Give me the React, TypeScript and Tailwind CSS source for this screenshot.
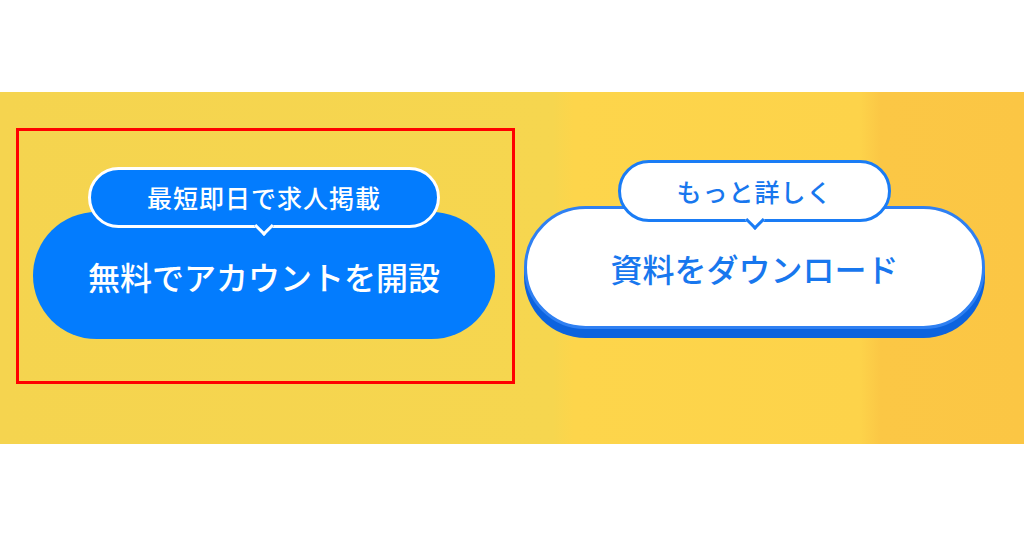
const jp = { fontFamily: '"Noto Sans CJK JP", "Noto Sans", sans-serif' };

function Tail({ className }: { className: string }) {
  return (
    <span
      className={`absolute left-1/2 -bottom-[8px] h-[14px] w-[14px] -translate-x-1/2 rotate-45 border-b-[3px] border-r-[3px] ${className}`}
    />
  );
}

export default function App() {
  return (
    <div className="h-[538px] w-[1024px] overflow-hidden bg-white pt-[92px]" style={jp}>
      <div className="flex h-[352px] items-start bg-[linear-gradient(90deg,#f5d44f_0%,#f6d64f_54%,#fdd54b_56%,#fdd34a_84%,#fbc745_86%,#fbc644_100%)] pl-[16px]">
        {/* highlighted primary CTA */}
        <div className="mt-[36px] h-[256px] w-[499px] border-[3px] border-[#ff0000] pl-[14px] pt-[81px]">
          <div className="relative flex h-[127px] w-[462px] items-center justify-center rounded-full bg-[#037cfe]">
            <div className="absolute left-[55px] top-[-45px] flex h-[61px] w-[352px] items-center justify-center rounded-full border-[3px] border-white bg-[#037cfe]">
              <span className="text-[25px] font-medium leading-none tracking-[1px] text-white">最短即日で求人掲載</span>
              <Tail className="border-white bg-[#037cfe]" />
            </div>
            <span className="text-[32px] font-medium leading-none text-white">無料でアカウントを開設</span>
          </div>
        </div>

        {/* secondary CTA */}
        <div className="ml-[9px] mt-[114px]">
          <div className="relative flex h-[123px] w-[461px] items-center justify-center rounded-full border-[3px] border-[#2f80f2] bg-white shadow-[0_9px_0_#0c63de]">
            <div className="absolute left-[91px] top-[-49px] flex h-[62px] w-[273px] items-center justify-center rounded-full border-[3px] border-[#1a7cf5] bg-white">
              <span className="text-[25px] font-medium leading-none tracking-[1px] text-[#1877ee]">もっと詳しく</span>
              <Tail className="border-[#1a7cf5] bg-white" />
            </div>
            <span className="text-[32px] font-medium leading-none text-[#1877ee]">資料をダウンロード</span>
          </div>
        </div>
      </div>
    </div>
  );
}
